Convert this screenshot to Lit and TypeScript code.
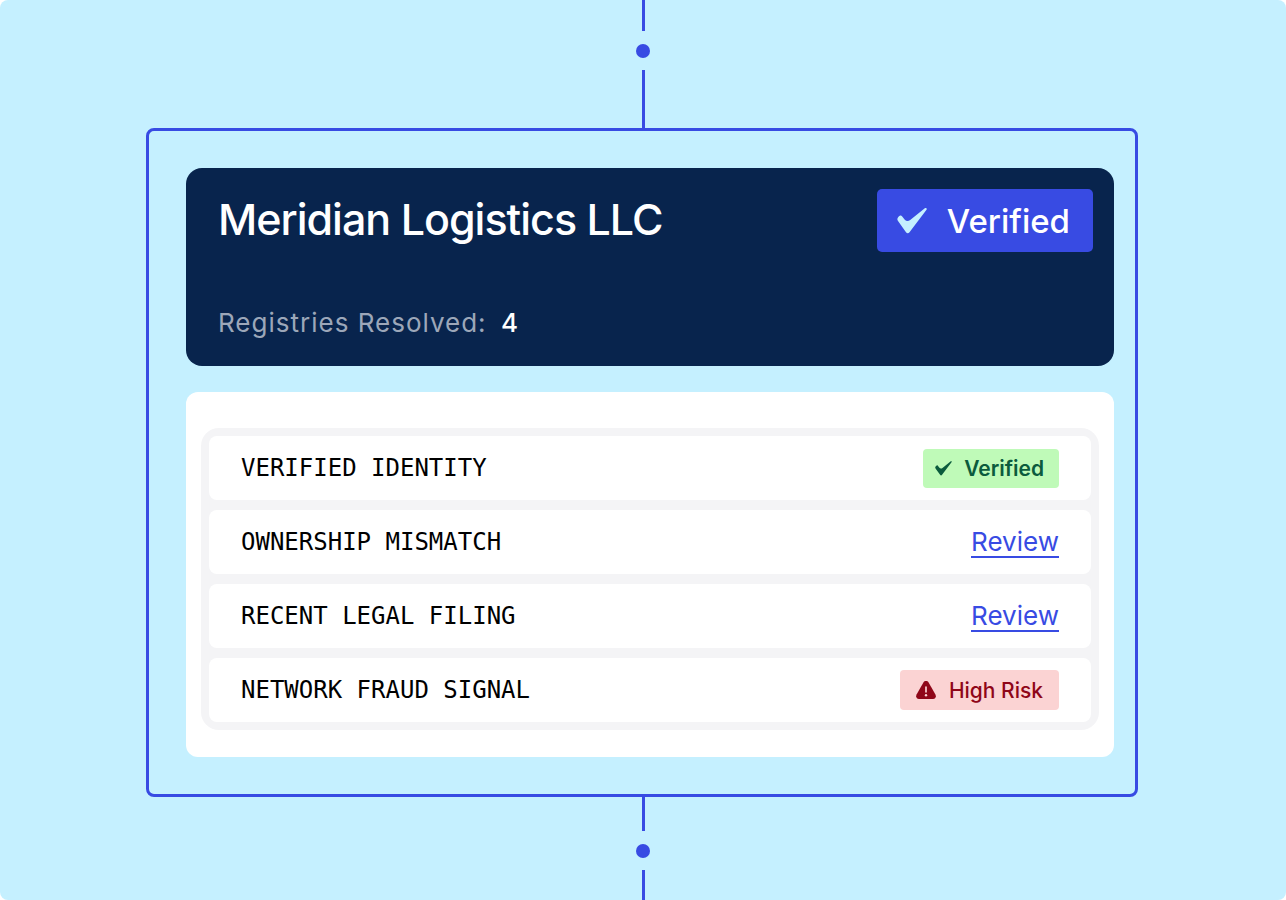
import { LitElement, html, css } from "lit";
import { customElement } from "lit/decorators.js";

interface Check {
  label: string;
  status: "verified" | "review" | "risk";
}

const checks: Check[] = [
  { label: "VERIFIED IDENTITY", status: "verified" },
  { label: "OWNERSHIP MISMATCH", status: "review" },
  { label: "RECENT LEGAL FILING", status: "review" },
  { label: "NETWORK FRAUD SIGNAL", status: "risk" },
];

const tick = html`<svg class="tick" viewBox="0 0 30 26" aria-hidden="true">
  <path fill="currentColor" d="M.4 10.800C.8 9.500 2 8.200 3.200 7.600C3.900 7.300 4.500 7.600 5 8.200L7.800 11.700C9.300 13.300 11.400 13.300 13.200 11.900L27.800 .3C29.200 -.5 30.300 .5 29.500 1.700L12.500 24.200C11.400 25.500 10 25.500 9 24.200L1.200 13.300C.6 12.500 .2 11.700 .4 10.800Z"/>
</svg>`;

const warning = html`<svg class="warning" viewBox="0 0 20 18" aria-hidden="true">
  <path fill="currentColor" d="M7.400 1.500C8.500 -.4 11.500 -.4 12.600 1.500L19.300 13.300C20.600 15.600 19.400 18 17 18H3C.6 18 -.6 15.600 .7 13.300Z"/>
  <path stroke="#fbd3d3" stroke-width="1.700" stroke-linecap="round" d="M10 6v4.800"/>
  <circle cx="10" cy="14.200" r="1.200" fill="#fbd3d3"/>
</svg>`;

@customElement("app-root")
export class AppRoot extends LitElement {
  static styles = css`
    :host {
      display: block;
      font-family: Inter, "Liberation Sans", sans-serif;
    }
    * { box-sizing: border-box; }
    .page {
      min-height: 100vh;
      display: flex;
      flex-direction: column;
      background: #c5f0ff;
      border-radius: 8px;
    }
    .connector { display: flex; flex-direction: column; align-items: center; }
    .bottom { flex: 1; }
    .line { width: 3px; height: 31px; background: #384be3; }
    .long { height: 58px; }
    .exit { height: 34px; }
    .rest { height: auto; min-height: 30px; flex: 1; }
    .dot {
      width: 14px;
      height: 14px;
      margin: 13px 0 12px;
      border-radius: 50%;
      background: #384be3;
    }
    .frame {
      margin: 0 148px 0 146px;
      border: 3px solid #384be3;
      border-radius: 8px;
      padding: 37px 21px 37px 37px;
      display: flex;
      flex-direction: column;
      gap: 26px;
    }
    .summary {
      background: #08244d;
      color: #fff;
      border-radius: 16px;
      padding: 21px 21px 25px 32px;
    }
    .top { display: flex; justify-content: space-between; align-items: flex-start; }
    h1 { margin: 0; font-size: 43px; line-height: 60px; font-weight: 450; letter-spacing: -1px; }
    .badge {
      display: flex;
      align-items: center;
      gap: 20px;
      height: 63px;
      padding: 0 23px 0 20px;
      border-radius: 5px;
      background: #384be3;
      font-size: 33px;
      font-weight: 550;
    }
    .badge .tick { width: 30px; height: 26px; color: #c5f0ff; }
    .resolved { margin: 53px 0 0; font-size: 26px; line-height: 36px; letter-spacing: 1px; color: #9ca7b9; }
    .resolved strong { font-weight: 500; color: #fff; margin-left: 6px; }
    .panel { background: #fff; border-radius: 12px; padding: 36px 15px 27px; }
    .checks {
      list-style: none;
      margin: 0;
      padding: 8px;
      border-radius: 18px;
      background: #f4f4f6;
      display: grid;
      gap: 10px;
    }
    .check {
      height: 64px;
      display: flex;
      align-items: center;
      justify-content: space-between;
      padding: 0 32px;
      border-radius: 8px;
      background: #fff;
      color: #000;
    }
    .label { font: 24px "DejaVu Sans Mono", monospace; }
    .chip {
      display: flex;
      align-items: center;
      gap: 12px;
      border-radius: 4px;
      font-size: 21px;
    }
    .verified { height: 39px; padding: 0 15px 0 12px; background: #bffab8; color: #0b5b3d; font-weight: 600; }
    .verified .tick { width: 17px; height: 15px; }
    .risk { height: 40px; padding: 0 16px; gap: 13px; background: #fbd3d3; color: #8f0618; font-weight: 500; }
    .warning { width: 20px; height: 18px; }
    a {
      padding-top: 2px;
      color: #384be3;
      font-size: 26px;
      line-height: 28px;
      text-decoration: none;
      border-bottom: 2px solid;
    }
  `;

  private renderStatus(status: Check["status"]) {
    if (status === "verified") return html`<span class="chip verified">${tick}Verified</span>`;
    if (status === "risk") return html`<span class="chip risk">${warning}High Risk</span>`;
    return html`<a href="#review">Review</a>`;
  }

  render() {
    return html`<main class="page">
      <div class="connector"><i class="line"></i><i class="dot"></i><i class="line long"></i></div>
      <section class="frame">
        <header class="summary">
          <div class="top"><h1>Meridian Logistics LLC</h1><span class="badge">${tick}Verified</span></div>
          <p class="resolved">Registries Resolved: <strong>4</strong></p>
        </header>
        <div class="panel">
          <ul class="checks">
            ${checks.map((c) => html`<li class="check"><span class="label">${c.label}</span>${this.renderStatus(c.status)}</li>`)}
          </ul>
        </div>
      </section>
      <div class="connector bottom"><i class="line exit"></i><i class="dot"></i><i class="line rest"></i></div>
    </main>`;
  }
}
